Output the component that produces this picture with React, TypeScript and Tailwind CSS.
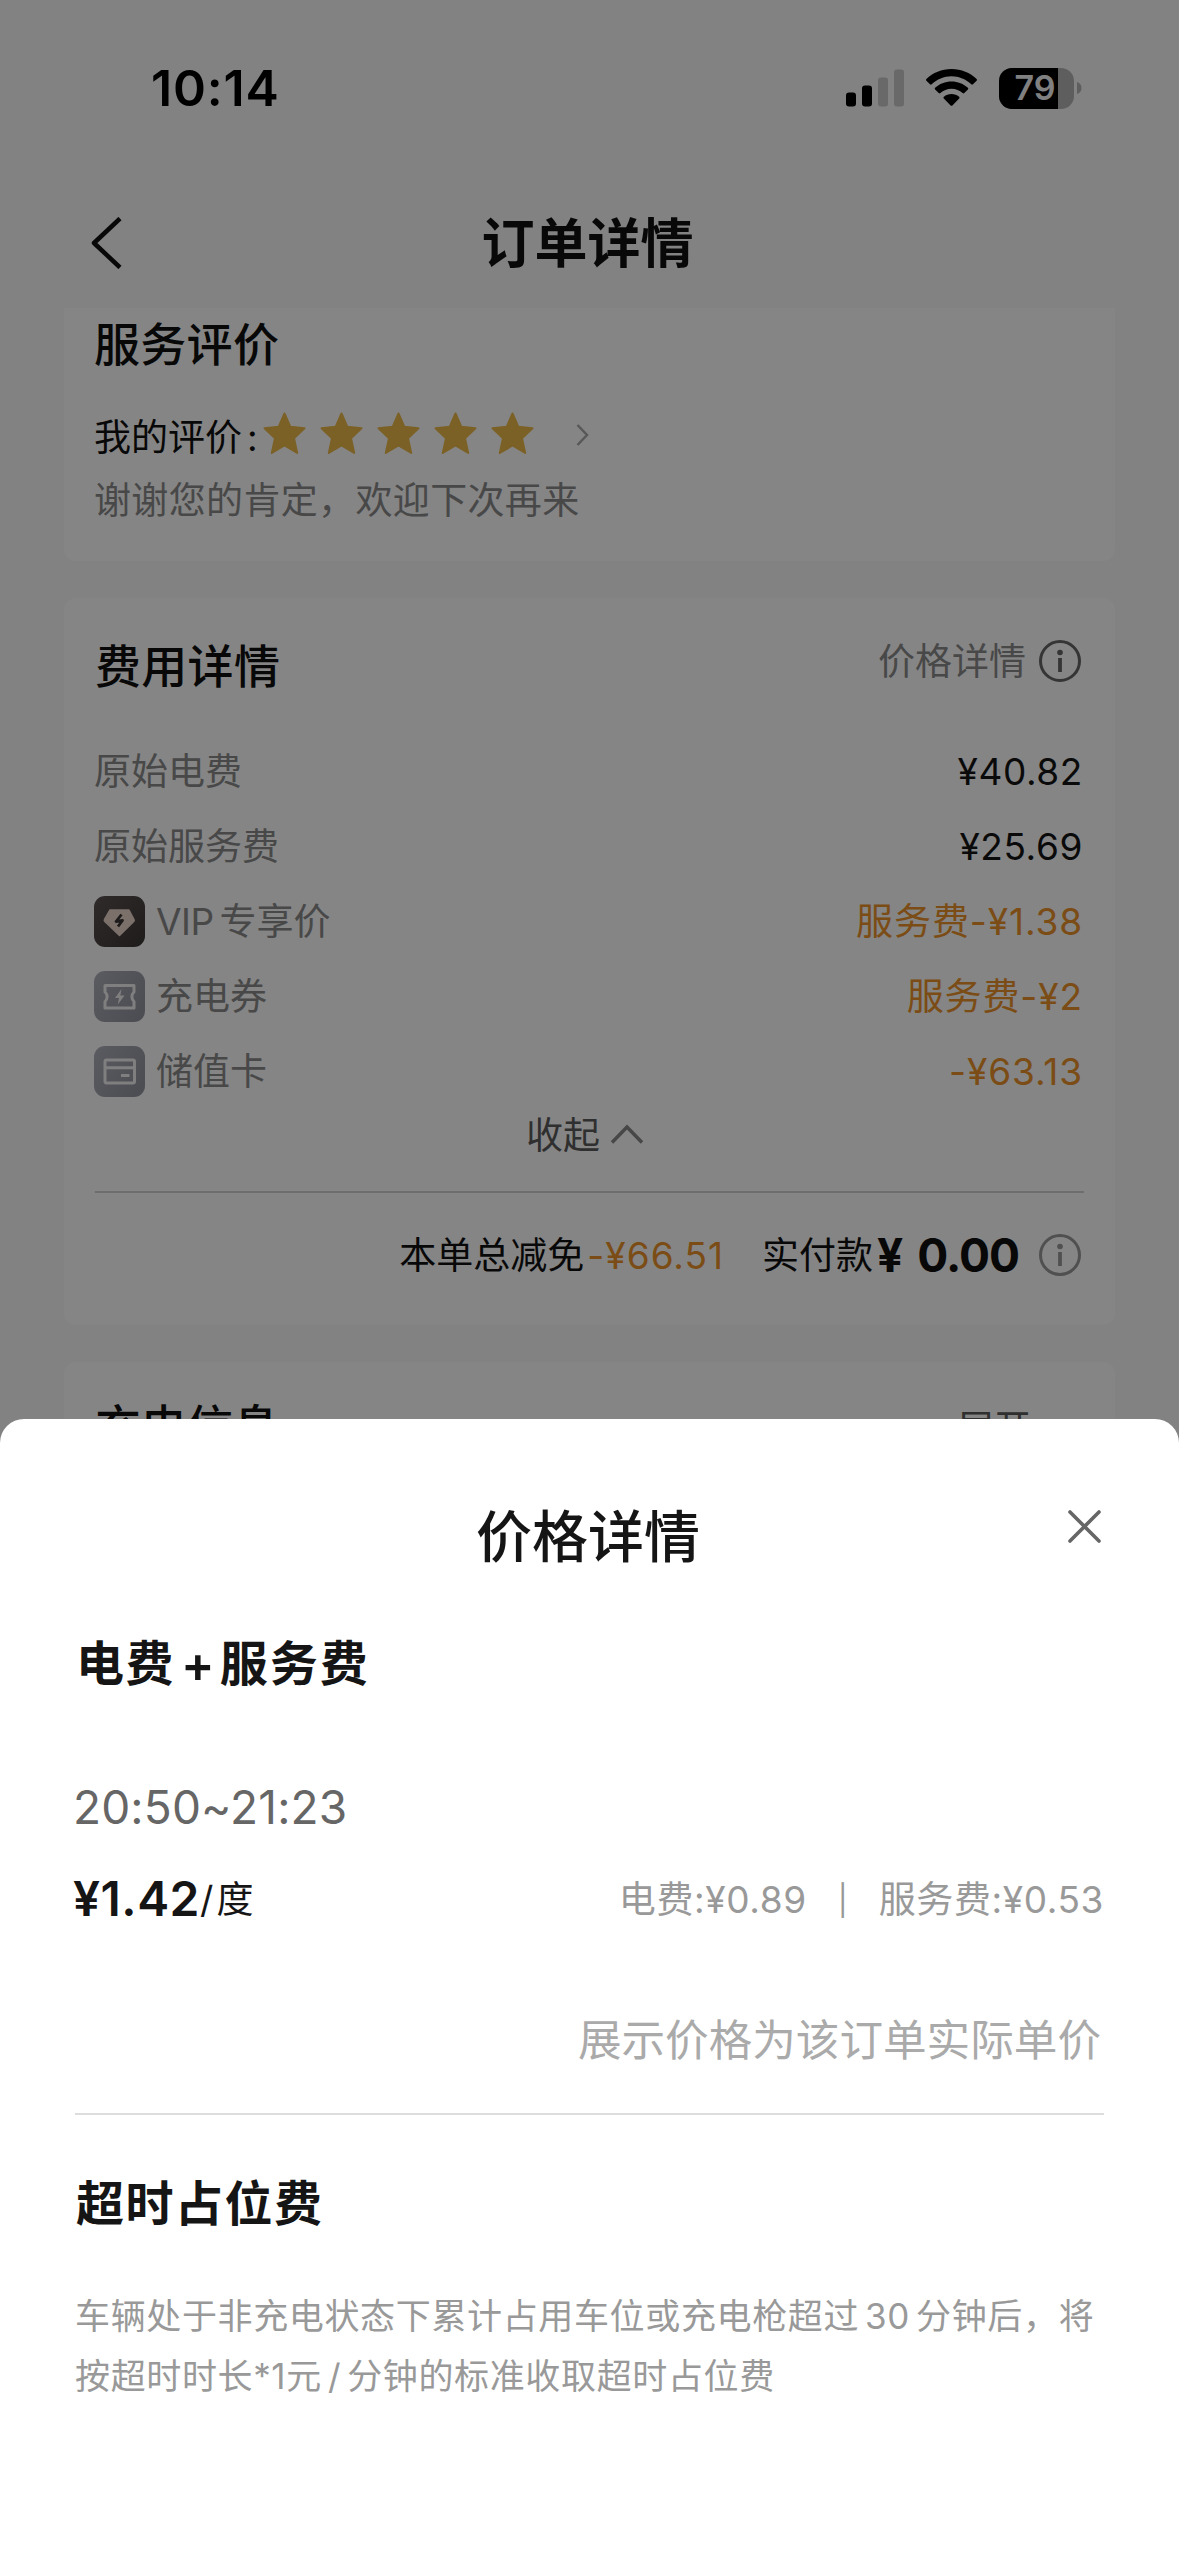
import { ReactNode } from "react";

interface FeeRowProps {
  label: ReactNode;
  value: string;
  icon?: ReactNode;
  discount?: boolean;
}

function StatusBar() {
  return (
    <div className="flex h-44 items-center justify-between pl-[151px] pr-[97px]">
      <span className="text-[50px] leading-none font-semibold tracking-[0.800px] text-black">10:14</span>
      <div className="flex items-center">
        <svg className="h-[38px] w-[58px]" viewBox="0 0 58 38">
          <rect x="0" y="23.5" width="10" height="14" rx="3" />
          <rect x="16" y="16.5" width="10" height="21" rx="3" />
          <rect x="32" y="8.5" width="10" height="29" rx="3" fill="#c9c9c9" />
          <rect x="48" y="0.5" width="10" height="37" rx="3" fill="#c9c9c9" />
        </svg>
        <svg className="ml-[22px] h-[38px] w-[51px]" viewBox="0 0 51 38">
          <path d="M25.5 0C35.3 0 44.2 3.8 50.6 10c.5.5.5 1.200 0 1.700l-3.600 3.600c-.5.5-1.200.5-1.700 0C40.100 10.300 33.100 7.300 25.500 7.300S10.900 10.300 5.700 15.300c-.5.5-1.200.5-1.700 0L.4 11.700c-.5-.5-.5-1.200 0-1.700C6.800 3.800 15.700 0 25.500 0z" />
          <path d="M25.500 12.500c6.300 0 12.100 2.400 16.400 6.300.5.5.5 1.200 0 1.700l-3.600 3.600c-.5.5-1.200.5-1.700 0-3-2.700-6.800-4.300-11.100-4.300s-8.100 1.600-11.100 4.300c-.5.5-1.200.5-1.700 0l-3.600-3.600c-.5-.5-.5-1.200 0-1.700 4.300-3.900 10.100-6.300 16.400-6.300z" />
          <path d="M25.500 25c2.900 0 5.500 1 7.600 2.700.6.500.6 1.200.1 1.700l-6.800 7c-.5.6-1.300.6-1.800 0l-6.800-7c-.5-.5-.5-1.200.1-1.700C20 26 22.600 25 25.500 25z" />
        </svg>
        <div className="relative ml-[22px] flex h-[41px] w-[75px] items-center justify-center overflow-hidden rounded-[13px] bg-[#b4b4b4]">
          <div className="absolute inset-y-0 left-0 w-[59px] bg-black" />
          <span className="relative pr-[3px] text-[34px] leading-none font-semibold text-[#f6f6f6]">79</span>
        </div>
        <svg className="ml-[3px] h-3 w-[5px]" viewBox="0 0 5 12">
          <path d="M0 0c3 1 4.500 3.300 4.500 6S3 11 0 12z" fill="#b4b4b4" />
        </svg>
      </div>
    </div>
  );
}

function Star() {
  return (
    <svg className="h-[43px] w-[43px]" viewBox="0 0 43 43">
      <path
        d="M21.500 1.500l5.900 13.300 14.100 1.500-10.500 9.900 3.200 14.800-12.700-7.500L8.800 41 12 26.200 1.500 16.300l14.100-1.500z"
        fill="#ecba4a"
        stroke="#ecba4a"
        strokeWidth="2"
        strokeLinejoin="round"
      />
    </svg>
  );
}

function InfoIcon({ className }: { className: string }) {
  return (
    <svg className={className} viewBox="0 0 42 42" fill="none" stroke="currentColor">
      <circle cx="21" cy="21" r="19.500" strokeWidth="3" />
      <circle cx="21" cy="12.500" r="2.800" fill="currentColor" stroke="none" />
      <path d="M21 18v14" strokeWidth="3.800" />
    </svg>
  );
}

function VipIcon() {
  return (
    <svg className="h-[51px] w-[51px]" viewBox="0 0 51 51">
      <defs>
        <linearGradient id="vip" x1="0" y1="0" x2="1" y2="1">
          <stop offset="0" stopColor="#5c5352" />
          <stop offset="1" stopColor="#3b3536" />
        </linearGradient>
      </defs>
      <rect width="51" height="51" rx="11" fill="url(#vip)" />
      <path
        d="M16 14h19l5 9.500c.4.800.2 1.500-.3 2L25.500 39.500 10.800 25.500c-.5-.5-.7-1.200-.3-2z"
        fill="#ecd8cb"
        stroke="#ecd8cb"
        strokeWidth="1.500"
        strokeLinejoin="round"
      />
      <path d="M27.500 18.500l-5.500 7 6.500-1-4.500 6" fill="none" stroke="#3b3536" strokeWidth="2.800" strokeLinejoin="round" />
    </svg>
  );
}

function CouponIcon() {
  return (
    <svg className="h-[51px] w-[51px]" viewBox="0 0 51 51">
      <defs>
        <linearGradient id="coupon" x1="0" y1="0" x2="1" y2="0.600">
          <stop offset="0" stopColor="#aeafba" />
          <stop offset="1" stopColor="#9496a0" />
        </linearGradient>
      </defs>
      <rect width="51" height="51" rx="11" fill="url(#coupon)" />
      <path
        d="M11 14.500h29v6.500c-2.800 2.500-2.800 7 0 9.500v6.500H11v-6.500c2.800-2.500 2.800-7 0-9.500z"
        fill="none"
        stroke="#f3f3f5"
        strokeWidth="3"
        strokeLinejoin="round"
      />
      <path d="M27.500 18l-6.500 9h4l-1.200 6.500 6.700-9h-4.200z" fill="#f3f3f5" />
    </svg>
  );
}

function CardIcon() {
  return (
    <svg className="h-[51px] w-[51px]" viewBox="0 0 51 51">
      <rect width="51" height="51" rx="11" fill="url(#coupon)" />
      <g fill="none" stroke="#f3f3f5" strokeWidth="3">
        <rect x="11" y="14" width="29.500" height="23" rx="1.500" />
        <path d="M11 21.800h29.500M27 29.500h8.500" />
      </g>
    </svg>
  );
}

function FeeRow({ label, value, icon, discount }: FeeRowProps) {
  return (
    <div className="flex h-[75px] items-center justify-between">
      <div className="flex items-center gap-[11px] text-[#8b8b8b]">
        {icon}
        <span>{label}</span>
      </div>
      <span className={discount ? "tracking-[0.900px] text-[#ec932a]" : "tracking-[0.600px] text-[#151515]"}>{value}</span>
    </div>
  );
}

function OrderPage() {
  return (
    <div className="h-full bg-[#f9f9f9] text-[37px] leading-none text-[#111]">
      <StatusBar />
      <header className="relative flex h-[132px] items-center justify-center">
        <svg className="absolute left-[90px] top-[41px] h-[52px] w-8" viewBox="0 0 32 52" fill="none" stroke="#111" strokeWidth="4.500">
          <path d="M30 1.500L4 26l26 24.500" strokeLinejoin="round" />
        </svg>
        <h1 className="-ml-[4px] pt-1 text-[53px] font-bold">订单详情</h1>
      </header>

      <main className="flex flex-col gap-[37px] px-16">
        <section className="h-[253px] rounded-b-xl bg-white px-[31px]">
          <h2 className="-ml-px flex h-[72px] items-center text-[46px] font-medium tracking-[0.300px]">服务评价</h2>
          <div className="-ml-px mt-[21px] flex h-[72px] items-center">
            <span className="w-[169px]">
              我的评价<span className="ml-[5px]">:</span>
            </span>
            <div className="-mt-[8px] flex gap-[14px]">
              {[1, 2, 3, 4, 5].map((n) => (
                <Star key={n} />
              ))}
            </div>
            <svg className="-mt-[5px] ml-[42px] h-[22px] w-[13px]" viewBox="0 0 13 22" fill="none" stroke="#aaa" strokeWidth="2.500">
              <path d="M1.500 1l9.500 10-9.500 10" />
            </svg>
          </div>
          <p className="-ml-px flex h-[54px] items-center tracking-[0.350px] text-[#8b8b8b]">谢谢您的肯定，欢迎下次再来</p>
        </section>

        <section className="h-[727px] rounded-xl bg-white px-[31px]">
          <div className="flex h-[136px] items-center justify-between">
            <h2 className="text-[46px] font-medium tracking-[0.300px]">费用详情</h2>
            <div className="-mt-[11px] flex items-center gap-[13px] pr-[3px]">
              <span className="pt-px text-[#8b8b8b]">价格详情</span>
              <InfoIcon className="h-[42px] w-[42px] text-[#666]" />
            </div>
          </div>
          <div className="-ml-px pr-px">
            <FeeRow label="原始电费" value="¥40.82" />
            <FeeRow label="原始服务费" value="¥25.69" />
            <FeeRow
              icon={<VipIcon />}
              label={
                <>
                  <span className="tracking-[-0.500px]">VIP</span>
                  <span className="ml-[6px]">专享价</span>
                </>
              }
              value="服务费-¥1.38"
              discount
            />
            <FeeRow icon={<CouponIcon />} label="充电券" value="服务费-¥2" discount />
            <FeeRow icon={<CardIcon />} label="储值卡" value="-¥63.13" discount />
          </div>
          <button className="mx-auto mt-px flex h-[51px] items-center gap-[11px] pr-[10px] text-[#5a5a5a]">
            收起
            <svg className="-mt-1 h-5 w-8" viewBox="0 0 32 20" fill="none" stroke="#888" strokeWidth="3.500">
              <path d="M1 18.500L16 3l15 15.500" />
            </svg>
          </button>
          <div className="mt-[30px] h-[2px] bg-[#d4d4d4]" />
          <div className="flex h-[124px] items-center justify-end pr-[3px]">
            <span>本单总减免</span>
            <span className="ml-[3px] tracking-[1px] text-[#ec932a]">-¥66.51</span>
            <span className="ml-[38px]">实付款</span>
            <span className="ml-1 text-[46px] font-bold">¥</span>
            <span className="ml-[14px] text-[46px] font-bold tracking-[-1px]">0.00</span>
            <InfoIcon className="ml-[20px] h-[42px] w-[42px] text-[#999]" />
          </div>
        </section>

        <section className="flex h-[300px] items-start justify-between rounded-t-xl bg-white px-[31px]">
          <h2 className="flex h-[128px] items-center text-[46px] font-medium">充电信息</h2>
          <div className="flex h-[133px] items-center gap-[9px] pr-[12px] text-[#5a5a5a]">
            展开
            <svg className="h-5 w-8" viewBox="0 0 32 20" fill="none" stroke="#888" strokeWidth="3.500">
              <path d="M1 1.500L16 17 31 1.500" />
            </svg>
          </div>
        </section>
      </main>
    </div>
  );
}

function PriceSheet() {
  return (
    <div className="absolute inset-x-0 bottom-0 h-[1137px] rounded-t-[24px] bg-white px-[75px] pt-[69px] text-[37px] leading-none text-[#151515]">
      <h2 className="flex h-24 items-center justify-center pt-px pr-[3px] text-[56px] font-medium">价格详情</h2>
      <button className="absolute right-[78px] top-[91px]">
        <svg className="h-[33px] w-[33px]" viewBox="0 0 33 33" fill="none" stroke="#666" strokeWidth="3.600" strokeLinecap="round">
          <path d="M2 2l29 29M31 2L2 31" />
        </svg>
      </button>

      <h3 className="mt-10 flex h-20 items-center text-[48px] font-bold">
        <span className="pl-px tracking-[1.500px]">电费</span>
        <span className="ml-[6px] text-[50px] font-semibold">+</span>
        <span className="ml-[5px] tracking-[2px]">服务费</span>
      </h3>
      <p className="-ml-[2px] mt-[73px] flex h-[60px] items-center text-[46px] tracking-[0.150px] text-[#666]">20:50~21:23</p>
      <div className="mt-8 flex h-[60px] items-center justify-between">
        <div className="-ml-[2px] flex items-center">
          <span className="text-[48px] font-semibold tracking-[0.500px]">¥1.42</span>
          <span className="pt-px">
            /<span className="ml-[3px]">度</span>
          </span>
        </div>
        <div className="flex items-center pt-px text-[#999]">
          <span className="tracking-[0.600px]">电费:¥0.89</span>
          <span className="mx-[31px] text-[30px]">|</span>
          <span className="tracking-[0.600px]">服务费:¥0.53</span>
        </div>
      </div>
      <p className="mt-[81px] flex h-[60px] items-center justify-end pt-[2px] pr-[3px] text-[43.600px] text-[#aaa]">展示价格为该订单实际单价</p>
      <div className="mt-[43px] h-[2px] bg-[#ddd]" />
      <h3 className="mt-12 flex h-20 items-center pl-px pt-px text-[48px] font-bold tracking-[1.500px]">超时占位费</h3>
      <div className="mt-[43px] text-[35px] leading-[60px] tracking-[0.640px] whitespace-nowrap text-[#999]">
        <p>
          车辆处于非充电状态下累计占用车位或充电枪超过<span className="mx-1.5">30</span>分钟后，将
        </p>
        <p>
          按超时时长*1元<span className="mx-1.5">/</span>分钟的标准收取超时占位费
        </p>
      </div>
    </div>
  );
}

export default function App() {
  return (
    <div className="relative h-[2556px] w-[1179px] overflow-hidden font-['Inter','Noto_Sans_CJK_SC',sans-serif]">
      <OrderPage />
      <div className="absolute inset-0 bg-black/48" />
      <PriceSheet />
    </div>
  );
}
